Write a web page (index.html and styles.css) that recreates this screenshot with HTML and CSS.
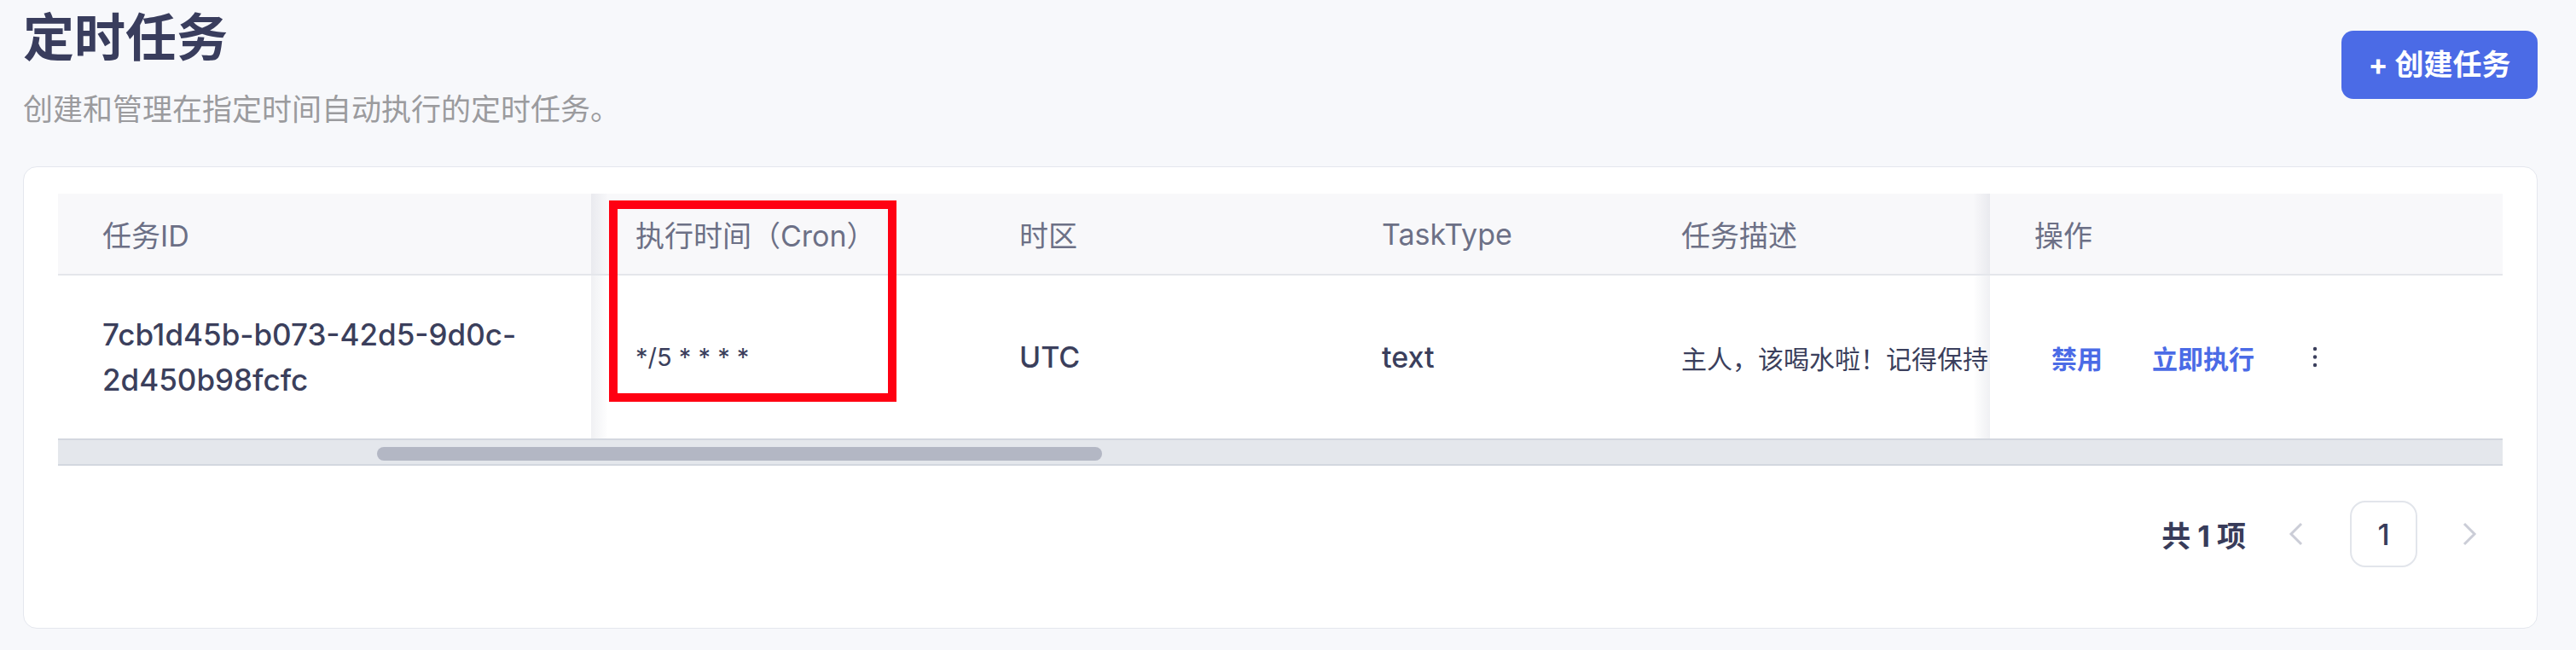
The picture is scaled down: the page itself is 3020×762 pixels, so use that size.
FILE: index.html
```html
<!DOCTYPE html>
<html lang="zh-CN">
<head>
<meta charset="utf-8">
<title>定时任务</title>
<link rel="stylesheet" href="styles.css">
</head>
<body>
<div class="page">
  <header class="page-head">
    <div class="titles">
      <h1 class="title">定时任务</h1>
      <p class="subtitle">创建和管理在指定时间自动执行的定时任务。</p>
    </div>
    <button class="create-btn" type="button">+ 创建任务</button>
  </header>

  <section class="card">
    <div class="table">
      <div class="trow thead">
        <div class="cell fix-left">任务ID</div>
        <div class="cell">执行时间（Cron）</div>
        <div class="cell">时区</div>
        <div class="cell">TaskType</div>
        <div class="cell clip">任务描述</div>
        <div class="cell fix-right">操作</div>
      </div>
      <div class="trow tbody">
        <div class="cell fix-left id-cell">7cb1d45b-b073-42d5-9d0c-<br>2d450b98fcfc</div>
        <div class="cell cron">*/5 * * * *</div>
        <div class="cell strong">UTC</div>
        <div class="cell strong">text</div>
        <div class="cell clip desc"><span>主人，该喝水啦！记得保持...</span></div>
        <div class="cell fix-right actions">
          <a class="act act-disable">禁用</a>
          <a class="act act-run">立即执行</a>
          <span class="more" aria-label="更多">
            <svg width="6" height="26" viewBox="0 0 6 26"><circle cx="3" cy="3" r="2.2"/><circle cx="3" cy="12.5" r="2.2"/><circle cx="3" cy="22" r="2.2"/></svg>
          </span>
        </div>
      </div>
      <div class="hscroll"><div class="thumb"></div></div>
    </div>

    <nav class="pager">
      <span class="pager-total">共 1 项</span>
      <span class="pg-btn pg-prev">
        <svg width="18" height="28" viewBox="0 0 18 28"><polyline points="15,2 3,14 15,26" fill="none" stroke="#cbcdd7" stroke-width="3"/></svg>
      </span>
      <span class="pg-btn pg-num">1</span>
      <span class="pg-btn pg-next">
        <svg width="18" height="28" viewBox="0 0 18 28"><polyline points="3,2 15,14 3,26" fill="none" stroke="#cbcdd7" stroke-width="3"/></svg>
      </span>
    </nav>
  </section>

  <div class="highlight"></div>
</div>
</body>
</html>
```

FILE: styles.css
```css
* { box-sizing: border-box; }

body {
  margin: 0;
  background: #f7f8fb;
  font-family: Inter, "Noto Sans CJK SC", sans-serif;
  color: #3b3f5c;
}

.page {
  position: relative;
  padding: 4px 45px 0 27px;
  min-height: 762px;
}

.page-head {
  display: flex;
  justify-content: space-between;
  align-items: flex-start;
}

.title {
  margin: 0;
  font-family: "Noto Sans CJK SC", sans-serif;
  font-size: 60px;
  line-height: 72px;
  font-weight: 700;
  color: #393d5d;
}

.subtitle {
  margin: 26px 0 0;
  font-family: "Noto Sans CJK SC", sans-serif;
  font-size: 35px;
  line-height: 48px;
  color: #9b9b9e;
}

.create-btn {
  margin-top: 32px;
  width: 230px;
  height: 80px;
  padding: 0;
  border: 0;
  border-radius: 14px;
  background: #4b6be6;
  color: #fff;
  font-family: Inter, "Noto Sans CJK SC", sans-serif;
  font-size: 34px;
  font-weight: 700;
  line-height: 80px;
}

.card {
  margin-top: 45px;
  background: #fff;
  border: 1px solid #e4e7ee;
  border-radius: 16px;
  padding: 31px 40px 71px;
}

.trow {
  display: grid;
  grid-template-columns: 625px 450px 425px 351px minmax(0, 1fr) 601px;
}

.cell {
  display: flex;
  align-items: center;
  padding-left: 52px;
  min-width: 0;
}

.thead .cell {
  height: 96px;
  background: #f8f8fa;
  border-bottom: 2px solid #e4e6eb;
  color: #6c7086;
  font-size: 34px;
}

.tbody .cell {
  height: 191px;
  background: #fff;
  color: #3b3f5c;
}

.fix-left { position: relative; }
.fix-left::after {
  content: "";
  position: absolute;
  top: 0;
  bottom: 0;
  right: -20px;
  width: 20px;
  background: linear-gradient(to right, rgba(40, 50, 90, 0.07), rgba(40, 50, 90, 0));
}

.fix-right { position: relative; }
.fix-right::before {
  content: "";
  position: absolute;
  top: 0;
  bottom: 0;
  left: -20px;
  width: 20px;
  background: linear-gradient(to left, rgba(40, 50, 90, 0.07), rgba(40, 50, 90, 0));
}

.id-cell {
  font-size: 35px;
  font-weight: 500;
  line-height: 53px;
}

.cron {
  font-size: 29px;
}

.strong {
  font-size: 34px;
  font-weight: 500;
}

.clip {
  overflow: hidden;
  white-space: nowrap;
}

.desc {
  font-size: 30px;
}

.actions {
  padding-left: 72px;
}

.act {
  font-size: 30px;
  font-weight: 600;
  color: #4b6be6;
  cursor: pointer;
}

.act-run { margin-left: 58px; }

.more {
  display: flex;
  margin-left: 68px;
  fill: #3b3f5c;
}

.hscroll {
  position: relative;
  height: 32px;
  background: #e4e7ec;
  border-top: 2px solid #d3d7df;
  border-bottom: 2px solid #d3d7df;
}

.thumb {
  position: absolute;
  top: 8px;
  left: 374px;
  width: 850px;
  height: 16px;
  border-radius: 8px;
  background: #b3b7c4;
}

.pager {
  margin-top: 41px;
  display: flex;
  justify-content: flex-end;
  align-items: center;
}

.pager-total {
  font-size: 34px;
  font-weight: 700;
  color: #383c5a;
  margin-right: 20px;
}

.pg-btn {
  width: 78px;
  height: 78px;
  display: flex;
  align-items: center;
  justify-content: center;
}

.pg-num {
  width: 79px;
  margin: 0 22px 0 24px;
  border: 2px solid #e2e5eb;
  border-radius: 18px;
  font-size: 34px;
  font-weight: 500;
  color: #383c5a;
}

.highlight {
  position: absolute;
  left: 714px;
  top: 235px;
  width: 337px;
  height: 236px;
  border: 10px solid #ff0012;
}
```
